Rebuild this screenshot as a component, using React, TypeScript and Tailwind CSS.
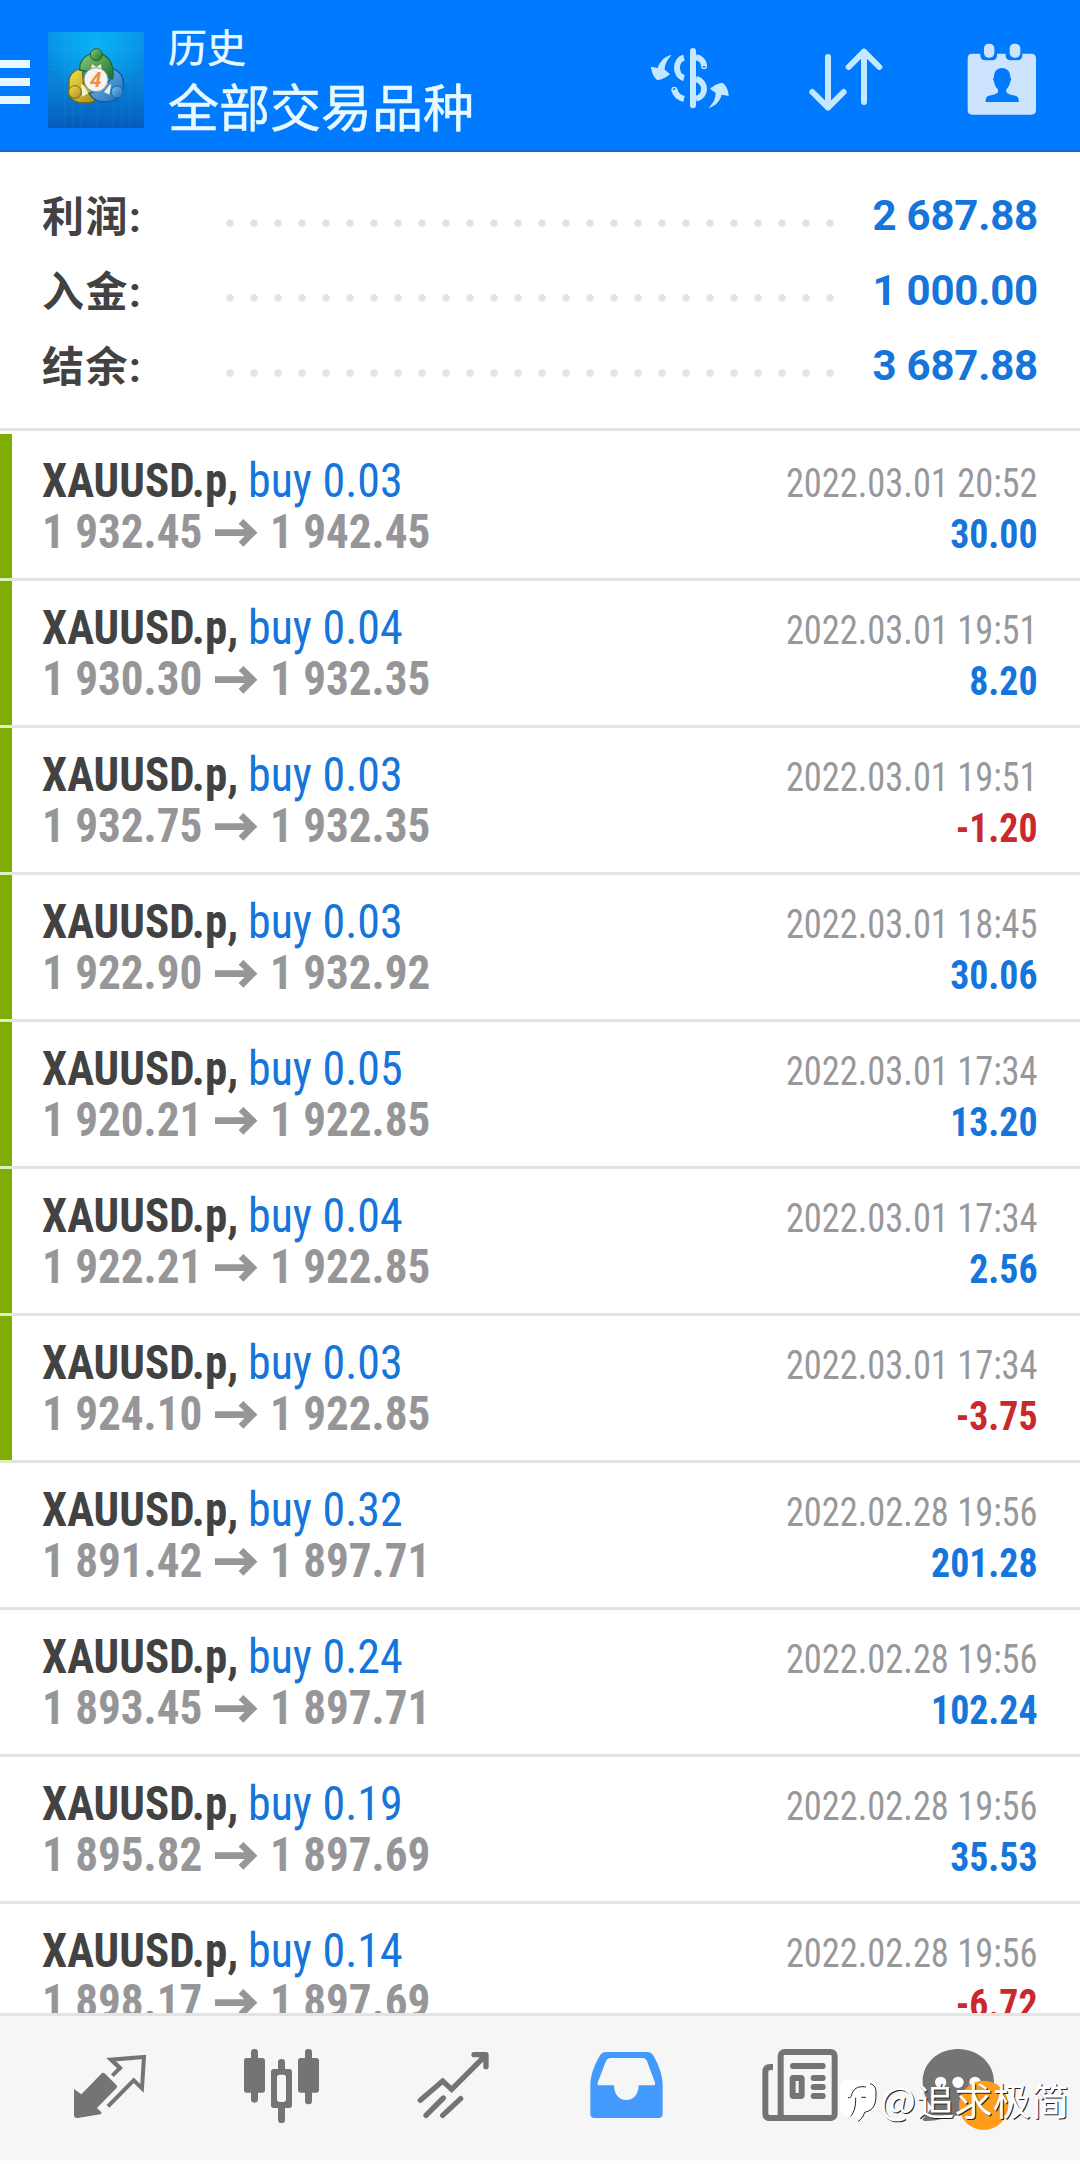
import React from "react";

type Deal = {
    volume: string;
    open: string;
    close: string;
    time: string;
    profit: string;
    recent?: boolean;
}

const summary = [
    {label: "利润:", value: "2 687.88"},
    {label: "入金:", value: "1 000.00"},
    {label: "结余:", value: "3 687.88"},
];

const deals: Deal[] = [
    {volume: "0.03", open: "1 932.45", close: "1 942.45", time: "2022.03.01 20:52", profit: "30.00", recent: true},
    {volume: "0.04", open: "1 930.30", close: "1 932.35", time: "2022.03.01 19:51", profit: "8.20", recent: true},
    {volume: "0.03", open: "1 932.75", close: "1 932.35", time: "2022.03.01 19:51", profit: "-1.20", recent: true},
    {volume: "0.03", open: "1 922.90", close: "1 932.92", time: "2022.03.01 18:45", profit: "30.06", recent: true},
    {volume: "0.05", open: "1 920.21", close: "1 922.85", time: "2022.03.01 17:34", profit: "13.20", recent: true},
    {volume: "0.04", open: "1 922.21", close: "1 922.85", time: "2022.03.01 17:34", profit: "2.56", recent: true},
    {volume: "0.03", open: "1 924.10", close: "1 922.85", time: "2022.03.01 17:34", profit: "-3.75", recent: true},
    {volume: "0.32", open: "1 891.42", close: "1 897.71", time: "2022.02.28 19:56", profit: "201.28"},
    {volume: "0.24", open: "1 893.45", close: "1 897.71", time: "2022.02.28 19:56", profit: "102.24"},
    {volume: "0.19", open: "1 895.82", close: "1 897.69", time: "2022.02.28 19:56", profit: "35.53"},
    {volume: "0.14", open: "1 898.17", close: "1 897.69", time: "2022.02.28 19:56", profit: "-6.72"},
];

function AppLogo() {
    return (
        <svg viewBox="144 96 288 288" className="ml-[18px] mt-8 h-24 w-24 shrink-0">
            <defs>
                <linearGradient id="logoBg" x1="0" y1="0" x2="0" y2="1">
                    <stop offset="0" stopColor="#0894ea" />
                    <stop offset="0.55" stopColor="#0780d6" />
                    <stop offset="1" stopColor="#055cba" />
                </linearGradient>
                <radialGradient id="logoGlow" cx="0.5" cy="0.12" r="0.55">
                    <stop offset="0" stopColor="#08b4f4" />
                    <stop offset="1" stopColor="#08b4f4" stopOpacity="0" />
                </radialGradient>
                <linearGradient id="green" x1="0" y1="0" x2="1" y2="1">
                    <stop offset="0" stopColor="#8fca7c" />
                    <stop offset="1" stopColor="#16702b" />
                </linearGradient>
                <linearGradient id="gold" x1="0" y1="0" x2="1" y2="1">
                    <stop offset="0" stopColor="#f5e04a" />
                    <stop offset="1" stopColor="#a8891a" />
                </linearGradient>
                <linearGradient id="sky" x1="0" y1="0" x2="1" y2="1">
                    <stop offset="0" stopColor="#7cc3f0" />
                    <stop offset="1" stopColor="#1b6cba" />
                </linearGradient>
            </defs>
            <path fill="url(#logoBg)" d="M144 96h288v288H144z" />
            <path fill="url(#logoGlow)" d="M144 96h288v288H144z" />
            <path
                stroke="#5cc4f5"
                strokeOpacity="0.22"
                strokeWidth="1.5"
                d="M195 96v288M219 96v288M244 96v288M292 96v288M340 96v288M365 96v288M389 96v288M144 145h288M144 194h288M144 243h288M144 292h288M144 340h288"
            />
            <g strokeLinejoin="round" strokeWidth="4">
                <path fill="url(#gold)" stroke="#6f6a1a" d="M247 205c-25 4-39 20-40 40v38c5 18 26 27 52 26 18-1 30-8 36-18l-45-40z" />
                <path fill="url(#sky)" stroke="#125a9a" d="M338 205c22 8 33 25 33 48-1 32-25 53-58 53-20 0-34-7-46-26l38-12 27-30z" />
                <path fill="url(#green)" stroke="#1d6b35" d="M270 162c-22 9-32 26-31 48l24 5 27-12 30 22 18 12c6-36-8-66-34-75z" />
            </g>
            <path fill="#eef3d0" d="m276 192 13 9 14-9 2 18h-32zM243 252l8 4 14 24-18 10zM334 252l-8 6-14 18 16 8z" />
            <circle cx="289" cy="164" r="18" fill="url(#green)" stroke="#1c6431" strokeWidth="3" />
            <circle cx="225" cy="276" r="19" fill="url(#gold)" stroke="#78661a" strokeWidth="3" />
            <circle cx="351" cy="276" r="18" fill="url(#sky)" stroke="#1c60a4" strokeWidth="3" />
            <circle cx="288" cy="239" r="36" fill="#f6f3f0" stroke="#8f9a8a" strokeWidth="3" />
            <text x="287" y="261" textAnchor="middle" className="fill-[#f28f45] font-['Roboto'] text-[62px] font-bold italic">4</text>
        </svg>
    )
}

function CurrencyIcon() {
    return (
        <svg viewBox="90 81 240 186" className="mt-[47px] h-[62px] w-20 shrink-0 fill-none stroke-[#c4e8ff]">
            <path className="fill-[#c4e8ff] stroke-none" d="M155 105c-18 3-35 17-42 39l-20-4c1 16 7 29 17 39 7 3 26-4 40-17l-16-13c0-16 8-30 21-44z" />
            <path className="fill-[#c4e8ff] stroke-none" d="M265 264c21-6 35-20 40-40l21 4c0-14-6-28-16-38-8-3-26 4-40 17l17 11c0 18-7 32-22 46z" />
            <path strokeWidth="18" strokeLinecap="round" d="M219 93v163" />
            <path strokeWidth="18" d="M192 113c-28 7-28 54 0 61M228 112c14 2 24 12 24 27M228 177c32 8 32 52 0 59M163 209c3 14 14 24 29 28" />
            <circle cx="252" cy="139" r="2" strokeWidth="14" />
            <circle cx="163" cy="209" r="2" strokeWidth="14" />
        </svg>
    )
}

function SortIcon() {
    return (
        <svg viewBox="564 81 228 195" className="ml-[78px] mt-[47px] h-[65px] w-[76px] shrink-0 fill-none stroke-[#c4e8ff]">
            <path strokeWidth="18" strokeLinecap="round" strokeLinejoin="round" d="M624 111v150M577 216l47 47 47-47M732 246V96M686 141l46-46 46 46" />
        </svg>
    )
}

function CalendarIcon() {
    return (
        <svg viewBox="1041 69 210 216" className="ml-[83px] mt-[43px] h-[72px] w-[70px] shrink-0 fill-[#cde4ff]">
            <path d="M1056 101h25v6c0 8 6 14 14 14h22c8 0 14-6 14-14v-6h26v6c0 8 6 14 14 14h22c8 0 14-6 14-14v-6h27q14 0 14 14v155q0 14-14 14h-178q-13 0-13-14V115q0-14 13-14z" />
            <rect x="1092" y="71" width="31" height="42" rx="14" />
            <rect x="1169" y="71" width="32" height="42" rx="14" />
            <path className="fill-[#007aff]" d="M1146 144c15 0 25 11 25 27 3 3 4 9 0 13-2 13-8 20-12 24v8c4 8 22 9 31 13q6 3 6 11v6h-99v-6q0-8 6-11c9-4 27-5 31-13v-8c-5-4-10-11-12-24-4-4-3-10 0-13 0-16 9-27 24-27z" />
        </svg>
    )
}

function SummaryRow({label, value}: {label: string; value: string}) {
    return (
        <div className="flex h-[75px] items-start leading-[75px] text-[42px] font-bold">
            <span className="w-[176px] shrink-0 pt-[2px] tracking-[1.5px] text-[#424242]">{label}</span>
            <span className="mt-[41px] h-2 w-[624px] bg-[radial-gradient(circle,#e2e2e2_3.4px,transparent_4px)] bg-[length:24px_8px]" />
            <span className="ml-auto tracking-[-0.2px] text-[#1575db]">{value}</span>
        </div>
    )
}

function DealRow({deal}: {deal: Deal}) {
    const loss = deal.profit.startsWith("-");

    return (
        <div className="flex h-[147px] shrink-0 flex-col">
            <div className="flex h-36 font-['Roboto_Condensed']">
                <div className={deal.recent ? "w-3 bg-[#7eae04]" : "w-3"} />
                <div className="flex flex-1 justify-between pl-[30px] pr-[42px]">
                    <div className="whitespace-nowrap pt-[21px] text-5xl leading-[51px]">
                        <p className="flex">
                            <span className="w-[206px] origin-left scale-x-[0.936] font-bold text-[#424242]">XAUUSD.p,</span>
                            <span className="origin-left scale-x-[0.957] text-[#1575db]">buy {deal.volume}</span>
                        </p>
                        <p className="flex font-bold text-[#969698]">
                            <span className="w-[173px] origin-left scale-x-[0.94]">{deal.open}</span>
                            <svg viewBox="0 0 129 84" className="mr-3 mt-[13px] h-7 w-[43px] fill-none stroke-[#969698]">
                                <path strokeWidth="20" d="M0 41h113M78 7l35 34-35 35" />
                            </svg>
                            <span className="origin-left scale-x-[0.94]">{deal.close}</span>
                        </p>
                    </div>
                    <div className="pt-6 text-right text-[40px] leading-[51px]">
                        <p className="origin-right scale-x-[0.91] text-[#98989a]">{deal.time}</p>
                        <p className={loss ? "origin-right scale-x-[0.945] font-bold text-[#c9292c]" : "origin-right scale-x-[0.945] font-bold text-[#1575db]"}>{deal.profit}</p>
                    </div>
                </div>
            </div>
            <div className="flex h-[3px] bg-[#e3e3e3]">
                <div className={deal.recent ? "w-3 bg-[#dfeec0]" : "w-3"} />
            </div>
        </div>
    )
}

function NavIcon({viewBox, children}: {viewBox: string; children: React.ReactNode}) {
    return (
        <svg viewBox={viewBox} className="h-[76px] w-[76px] shrink-0 overflow-visible fill-none stroke-[#747474]">
            {children}
        </svg>
    )
}

function BottomNav() {
    return (
        <nav className="flex h-[147px] shrink-0 gap-[97px] border-t-[3px] border-[#e3e3e3] bg-[#f6f6f6] pl-[70px] pt-8">
            <NavIcon viewBox="30 24 228 228">
                <path className="fill-[#747474] stroke-none" d="M42 147l22 16 60-62q5-5 11 0l34 34q5 5 0 10l-58 59 13 13q2 4-3 6l-68 11q-11 1-11-9z" />
                <path strokeWidth="12" d="M157 107l23-23-27-25 99-8-6 94-25-24-77 78" />
                <path strokeWidth="12" strokeLinecap="round" strokeLinejoin="round" d="m155 60 25 24" />
            </NavIcon>
            <NavIcon viewBox="549 24 228 228">
                <g className="fill-[#747474] stroke-none">
                    <rect x="552" y="54" width="63" height="104" rx="8" />
                    <rect x="714" y="54" width="63" height="104" rx="8" />
                    <rect x="573" y="27" width="21" height="161" rx="10" />
                    <rect x="735" y="27" width="21" height="166" rx="10" />
                    <rect x="654" y="57" width="21" height="40" rx="10" />
                    <rect x="654" y="190" width="21" height="59" rx="10" />
                    <rect x="633" y="87" width="63" height="117" rx="8" />
                </g>
                <rect x="651" y="104" width="27" height="82" rx="8" className="fill-[#f6f6f6] stroke-none" />
            </NavIcon>
            <NavIcon viewBox="1068 24 228 228">
                <path strokeWidth="16" strokeLinecap="round" d="M1081 181l67-58 27 25 100-100M1098 226l52-52M1148 226l54-50" />
                <path strokeWidth="16" strokeLinecap="round" strokeLinejoin="round" d="M1242 44h36v36" />
                <path className="fill-[#747474] stroke-none" d="M1250 44h28v30z" />
            </NavIcon>
            <NavIcon viewBox="27 24 228 228">
                <path
                    fillRule="evenodd"
                    className="fill-[#4399fc] stroke-none"
                    d="M78 36h124q11 0 17 9c15 26 29 58 29 92v84q0 13-13 13H44q-13 0-13-13v-84c0-34 14-66 30-92q6-9 17-9zM92 54q-10 0-14 9l-25 65q-2 8 6 8h43c0 27 15 44 37 44s37-17 37-44h43q8 0 6-8l-24-65q-4-9-14-9z"
                />
            </NavIcon>
            <NavIcon viewBox="546 24 228 228">
                <rect x="602" y="36" width="162" height="198" rx="12" strokeWidth="18" />
                <path strokeWidth="18" d="M579 81h-8q-15 0-15 15v125q0 13 14 13h46" />
                <path strokeWidth="18" strokeLinecap="round" d="M639 78h89M701 114h27M701 141h27M701 168h27" />
                <rect x="638" y="114" width="27" height="54" rx="2" strokeWidth="18" />
                <rect x="643" y="119" width="17" height="44" strokeWidth="4" />
            </NavIcon>
            <NavIcon viewBox="1065 24 228 228">
                <path className="fill-[#747474] stroke-none" d="M1134 27c60 0 108 42 108 98 0 55-44 97-104 101-31 2-57 17-100 17-11 0-12-5-7-9l26-32c-19-19-29-48-29-77 0-56 46-98 106-98z" />
                <g className="fill-white stroke-none">
                    <circle cx="1082" cy="127" r="17" />
                    <circle cx="1134" cy="127" r="17" />
                    <circle cx="1185" cy="127" r="17" />
                </g>
                <circle cx="1211" cy="196" r="74" className="fill-[#ff9c1a] stroke-none" />
            </NavIcon>
        </nav>
    )
}

function Watermark() {
    return (
        <div className="absolute bottom-[40px] left-[840px] flex h-[44px] items-start">
            <svg viewBox="0 165 120 135" className="h-[45px] w-10 fill-none">
                <path className="fill-white" d="M22 163h66q21 0 21 21v45c0 20-13 34-36 38l-18 21-3-14-22 2C12 278 0 262 0 240v-52q0-25 22-25z" />
                <path stroke="#222" strokeWidth="3" d="M24 218c14 0 8-8 16-20 9-14 26-14 38-12M47 218c0 24-2 40-15 56M64 217h14M90 176c14 4 18 12 18 28 0 30-3 51-34 58-4 13-9 19-20 28" />
            </svg>
            <span className="whitespace-nowrap font-['Noto_Sans_CJK_SC'] text-[38px] leading-[38px] tracking-[0.3px] text-white [text-shadow:1px_1px_0_#222]">@追求极简</span>
        </div>
    )
}

export default function App() {
    return (
        <div className="relative flex h-[2164px] w-[1080px] flex-col overflow-hidden bg-[#fdfdfd] font-['Roboto','Noto_Sans_CJK_SC',sans-serif]">
            <header className="flex h-[152px] shrink-0 border-b-2 border-[#1468c6] bg-[#007aff]">
                <div className="mt-[60px] flex w-[30px] shrink-0 flex-col gap-[10px]">
                    <div className="h-2 bg-[#e6f8ff]" />
                    <div className="h-2 bg-[#e6f8ff]" />
                    <div className="h-2 bg-[#e6f8ff]" />
                </div>
                <AppLogo />
                <div className="ml-6 w-[482px] shrink-0 pt-[25px] font-['Noto_Sans_CJK_SC'] text-[#e8f9ff] [-webkit-text-stroke:0.5px_#e8f9ff]">
                    <p className="text-[39px] leading-10">历史</p>
                    <h1 className="mt-[10px] text-[51px] leading-[60px]">全部交易品种</h1>
                </div>
                <CurrencyIcon />
                <SortIcon />
                <CalendarIcon />
            </header>

            <section className="h-[279px] shrink-0 border-b-[3px] border-[#e3e3e3] bg-white px-[42px] pt-[26px]">
                {summary.map((row) => <SummaryRow key={row.label} {...row} />)}
            </section>

            <main className="flex h-[1582px] shrink-0 flex-col overflow-hidden bg-white pt-[3px]">
                {deals.map((deal, idx) => <DealRow key={idx} deal={deal} />)}
            </main>

            <BottomNav />
            <Watermark />
        </div>
    )
}
